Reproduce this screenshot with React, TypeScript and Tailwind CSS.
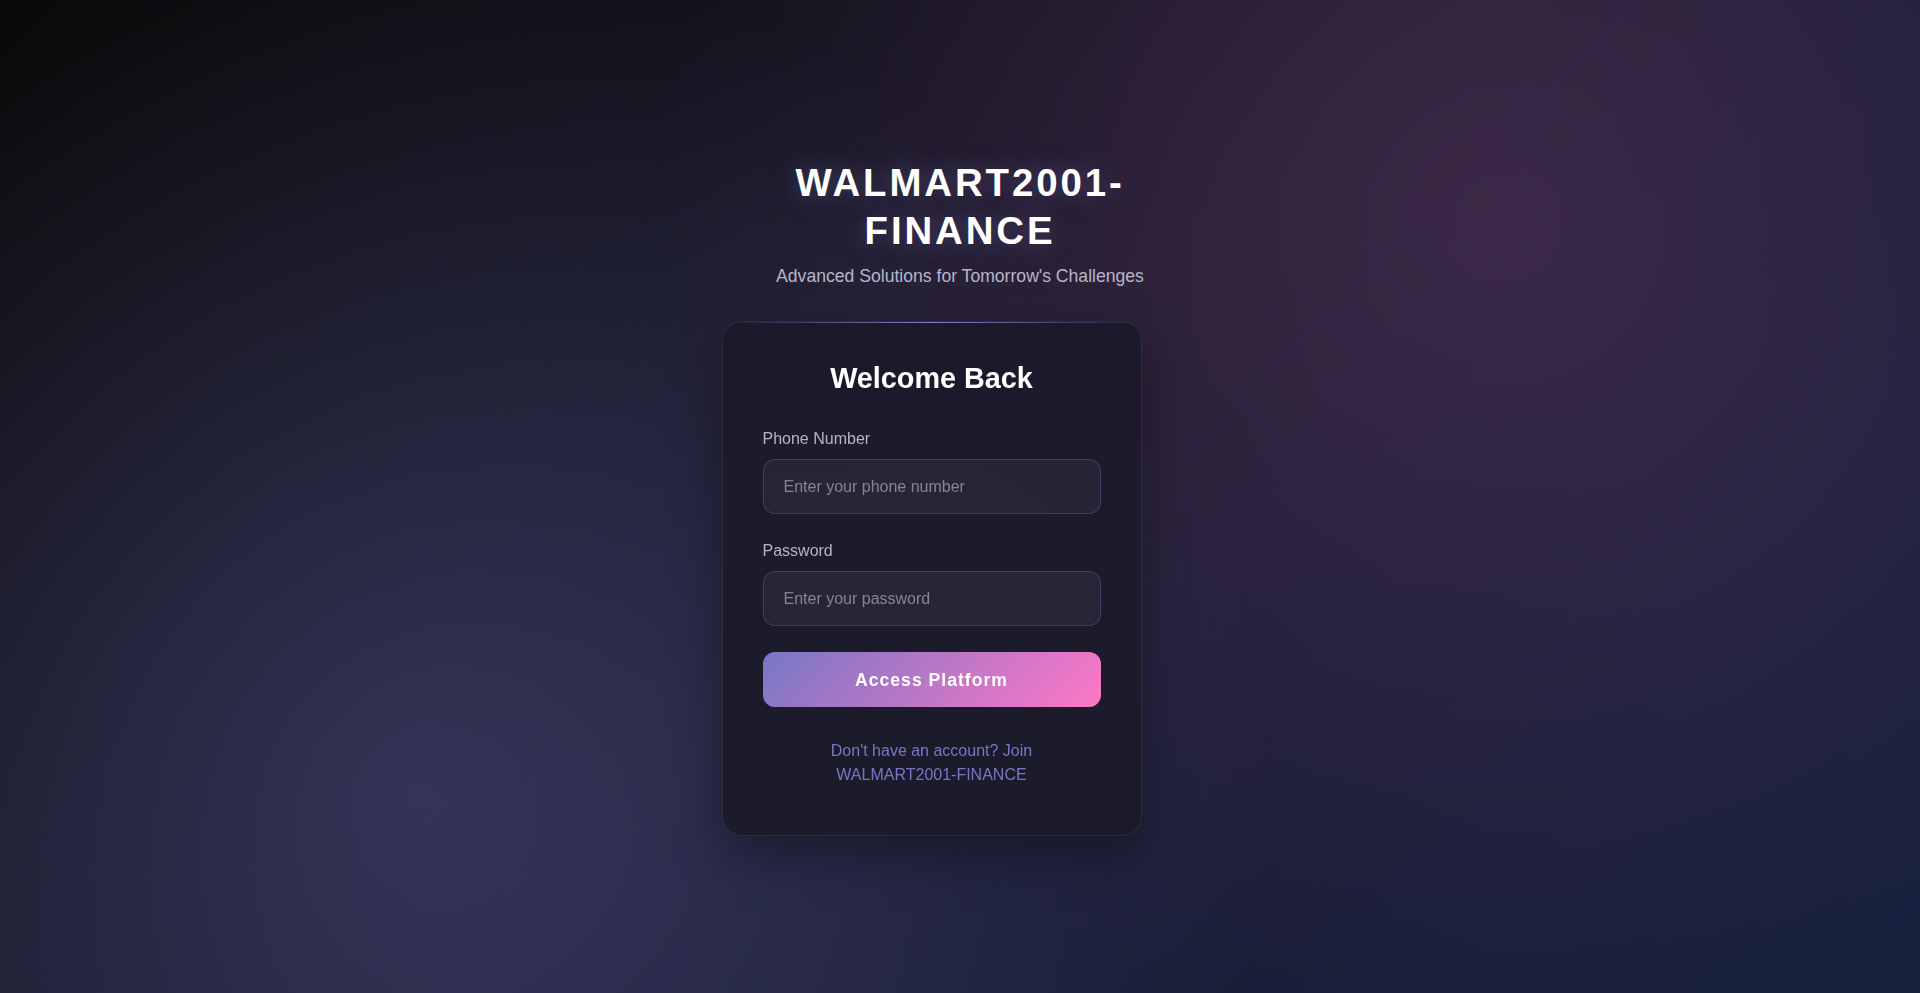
export default function App() {
  return (
    <main className="flex min-h-screen w-full flex-col items-center bg-[radial-gradient(circle_at_22%_80%,rgba(120,119,198,0.3)_0%,transparent_50%),radial-gradient(circle_at_78%_22%,rgba(255,119,198,0.15)_0%,transparent_50%),linear-gradient(135deg,#0a0a0a_0%,#1a1a2e_50%,#16213e_100%)] font-['Liberation_Sans',Arial,sans-serif] text-white">
      <header className="mt-[159px] w-[420px] text-center">
        <h1 className="mb-2 text-[38.4px] leading-[48px] font-bold tracking-[2.9px] text-white [text-shadow:0_0_24px_rgba(120,119,198,0.45)]">
          WALMART2001-FINANCE
        </h1>
        <p className="text-[17.6px] leading-[26.4px] text-[#b7b5cb]">Advanced Solutions for Tomorrow's Challenges</p>
      </header>

      <section className="relative mt-8 mr-[57px] w-[420px] overflow-hidden rounded-[20px] border border-white/[0.08] bg-[rgba(27,26,41,0.92)] px-10 pt-10 pb-[48px] shadow-[0_20px_50px_rgba(0,0,0,0.35)] backdrop-blur-md">
        <div className="absolute top-0 right-0 left-0 h-px bg-gradient-to-r from-transparent via-[#7f7ed0] to-transparent" />
        <h2 className="mb-[33px] text-center text-[28.8px] leading-[32px] font-bold text-white">Welcome Back</h2>

        <div className="mb-[25px]">
          <label className="mb-2 block text-base leading-6 text-[#b6b4c8]">Phone Number</label>
          <input
            type="tel"
            placeholder="Enter your phone number"
            className="block h-[55px] w-full rounded-xl border border-[rgba(120,119,198,0.3)] bg-white/5 px-5 text-base text-white outline-none placeholder:text-[#85849a]"
          />
        </div>

        <div className="mb-[26px]">
          <label className="mb-2 block text-base leading-6 text-[#b6b4c8]">Password</label>
          <input
            type="password"
            placeholder="Enter your password"
            className="block h-[55px] w-full rounded-xl border border-[rgba(120,119,198,0.3)] bg-white/5 px-5 text-base text-white outline-none placeholder:text-[#85849a]"
          />
        </div>

        <button className="block h-[55px] w-full rounded-xl bg-[linear-gradient(135deg,#7877c6_0%,#ff77c6_100%)] text-[17.6px] font-bold tracking-[1px] text-white">
          Access Platform
        </button>

        <p className="mx-auto mt-8 w-[230px] text-center text-base leading-6 text-[#7877c6]">
          Don't have an account? Join WALMART2001-FINANCE
        </p>
      </section>
    </main>
  );
}
